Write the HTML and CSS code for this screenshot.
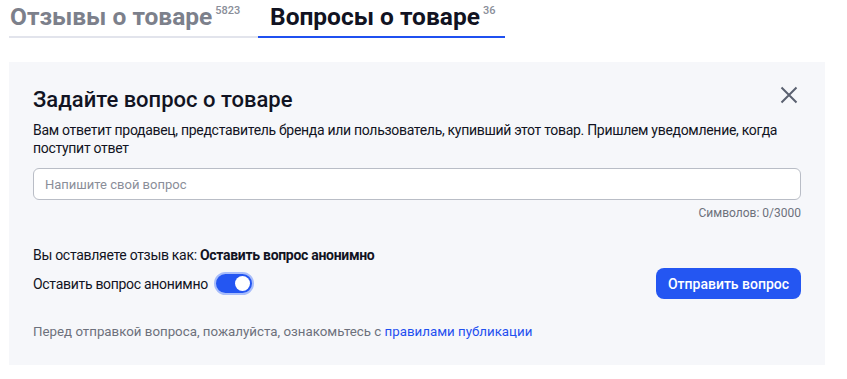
FILE: index.html
```html
<!DOCTYPE html>
<html lang="ru">
<head>
    <meta charset="UTF-8">
    <meta name="viewport" content="width=device-width, initial-scale=1.0">
    <title>Вопросы о товаре</title>
    <link rel="stylesheet" href="styles.css">
</head>
<body>
    <div class="tabs">
        <div class="tab">Отзывы о товаре<sup>5823</sup></div>
        <div class="tab active">Вопросы о товаре<sup>36</sup></div>
    </div>

    <div class="panel">
        <div class="panel-head">
            <h2>Задайте вопрос о товаре</h2>
            <button class="close" type="button" aria-label="Закрыть">
                <svg width="18" height="18" viewBox="0 0 18 18">
                    <path d="M1.5 1.5 L16.5 16.5 M16.5 1.5 L1.5 16.5" stroke="#5b6170" stroke-width="2" fill="none"/>
                </svg>
            </button>
        </div>
        <p class="hint">Вам ответит продавец, представитель бренда или пользователь, купивший этот товар. Пришлем уведомление, когда поступит ответ</p>

        <input class="question" type="text" placeholder="Напишите свой вопрос">
        <div class="counter">Символов: 0/3000</div>

        <p class="author">Вы оставляете отзыв как: <b>Оставить вопрос анонимно</b></p>

        <div class="send-row">
            <label class="anon">
                Оставить вопрос анонимно
                <span class="switch"><span class="knob"></span></span>
            </label>
            <button class="send" type="submit">Отправить вопрос</button>
        </div>

        <p class="rules">Перед отправкой вопроса, пожалуйста, ознакомьтесь с <a href="#">правилами публикации</a></p>
    </div>
</body>
</html>
```

FILE: styles.css
```css
body {
    margin: 0;
    padding: 0 22px 0 9px;
    font-family: Roboto, "Noto Sans", sans-serif;
    color: #111322;
    background: #fff;
}

.tabs {
    display: flex;
    width: 496px;
}

.tab {
    padding: 3px 13px 5px 12px;
    font-size: 24.5px;
    font-weight: 700;
    line-height: 28px;
    color: #7c808b;
    border-bottom: 2px solid #e2e4ec;
    white-space: nowrap;
}

.tab:first-child {
    flex-shrink: 0;
    padding-left: 1px;
    width: 235px;
}

.tab.active {
    flex: 1;
    padding-right: 8px;
    color: #111322;
    border-bottom-color: #1f50f0;
}

.tab sup {
    font-size: 11px;
    font-weight: 500;
    line-height: 0;
    margin-left: 3px;
    color: #8a8e99;
    vertical-align: 11px;
}

.panel {
    margin-top: 24px;
    padding: 26px 24px 24px;
    background: #f6f7fa;
}

.panel-head {
    display: flex;
    justify-content: space-between;
    align-items: center;
}

h2 {
    margin: 0;
    font-size: 22px;
    font-weight: 500;
    line-height: 24px;
}

.close {
    border: none;
    background: none;
    padding: 0;
    margin-right: 3px;
    width: 18px;
    height: 18px;
    margin-top: -10px;
    cursor: pointer;
}

.hint {
    margin: 9px 0 0;
    font-size: 14px;
    line-height: 18px;
    letter-spacing: -0.3px;
}

.question {
    display: block;
    box-sizing: border-box;
    width: 100%;
    height: 32px;
    margin-top: 11px;
    padding: 0 11px;
    border: 1.5px solid #b9bdc6;
    border-radius: 6px;
    background: #fff;
    font-family: inherit;
    font-size: 13px;
}

.question::placeholder {
    color: #8a8e99;
}

.counter {
    margin-top: 5px;
    text-align: right;
    font-size: 12px;
    line-height: 16px;
    color: #6d717c;
}

.author {
    margin: 25px 0 0;
    font-size: 14px;
    line-height: 18px;
    letter-spacing: -0.3px;
}

.send-row {
    display: flex;
    justify-content: space-between;
    align-items: center;
    margin-top: 4px;
}

.anon {
    display: flex;
    align-items: center;
    gap: 6px;
    font-size: 14px;
    letter-spacing: -0.3px;
}

.switch {
    display: flex;
    justify-content: flex-end;
    align-items: center;
    box-sizing: border-box;
    width: 40px;
    height: 23px;
    padding: 2px;
    border: 2px solid #a8bdfa;
    border-radius: 12px;
    background: #2456f2;
}

.knob {
    width: 15px;
    height: 15px;
    border-radius: 50%;
    background: #fff;
}

.send {
    height: 31px;
    width: 145px;
    padding: 0;
    border: none;
    border-radius: 8px;
    background: #2456f2;
    color: #fff;
    font-family: inherit;
    font-size: 14px;
    font-weight: 500;
    white-space: nowrap;
    cursor: pointer;
}

.rules {
    margin: 24px 0 0;
    font-size: 13.3px;
    line-height: 18px;
    color: #6d717c;
}

.rules a {
    color: #1f50f0;
    text-decoration: none;
}
```
